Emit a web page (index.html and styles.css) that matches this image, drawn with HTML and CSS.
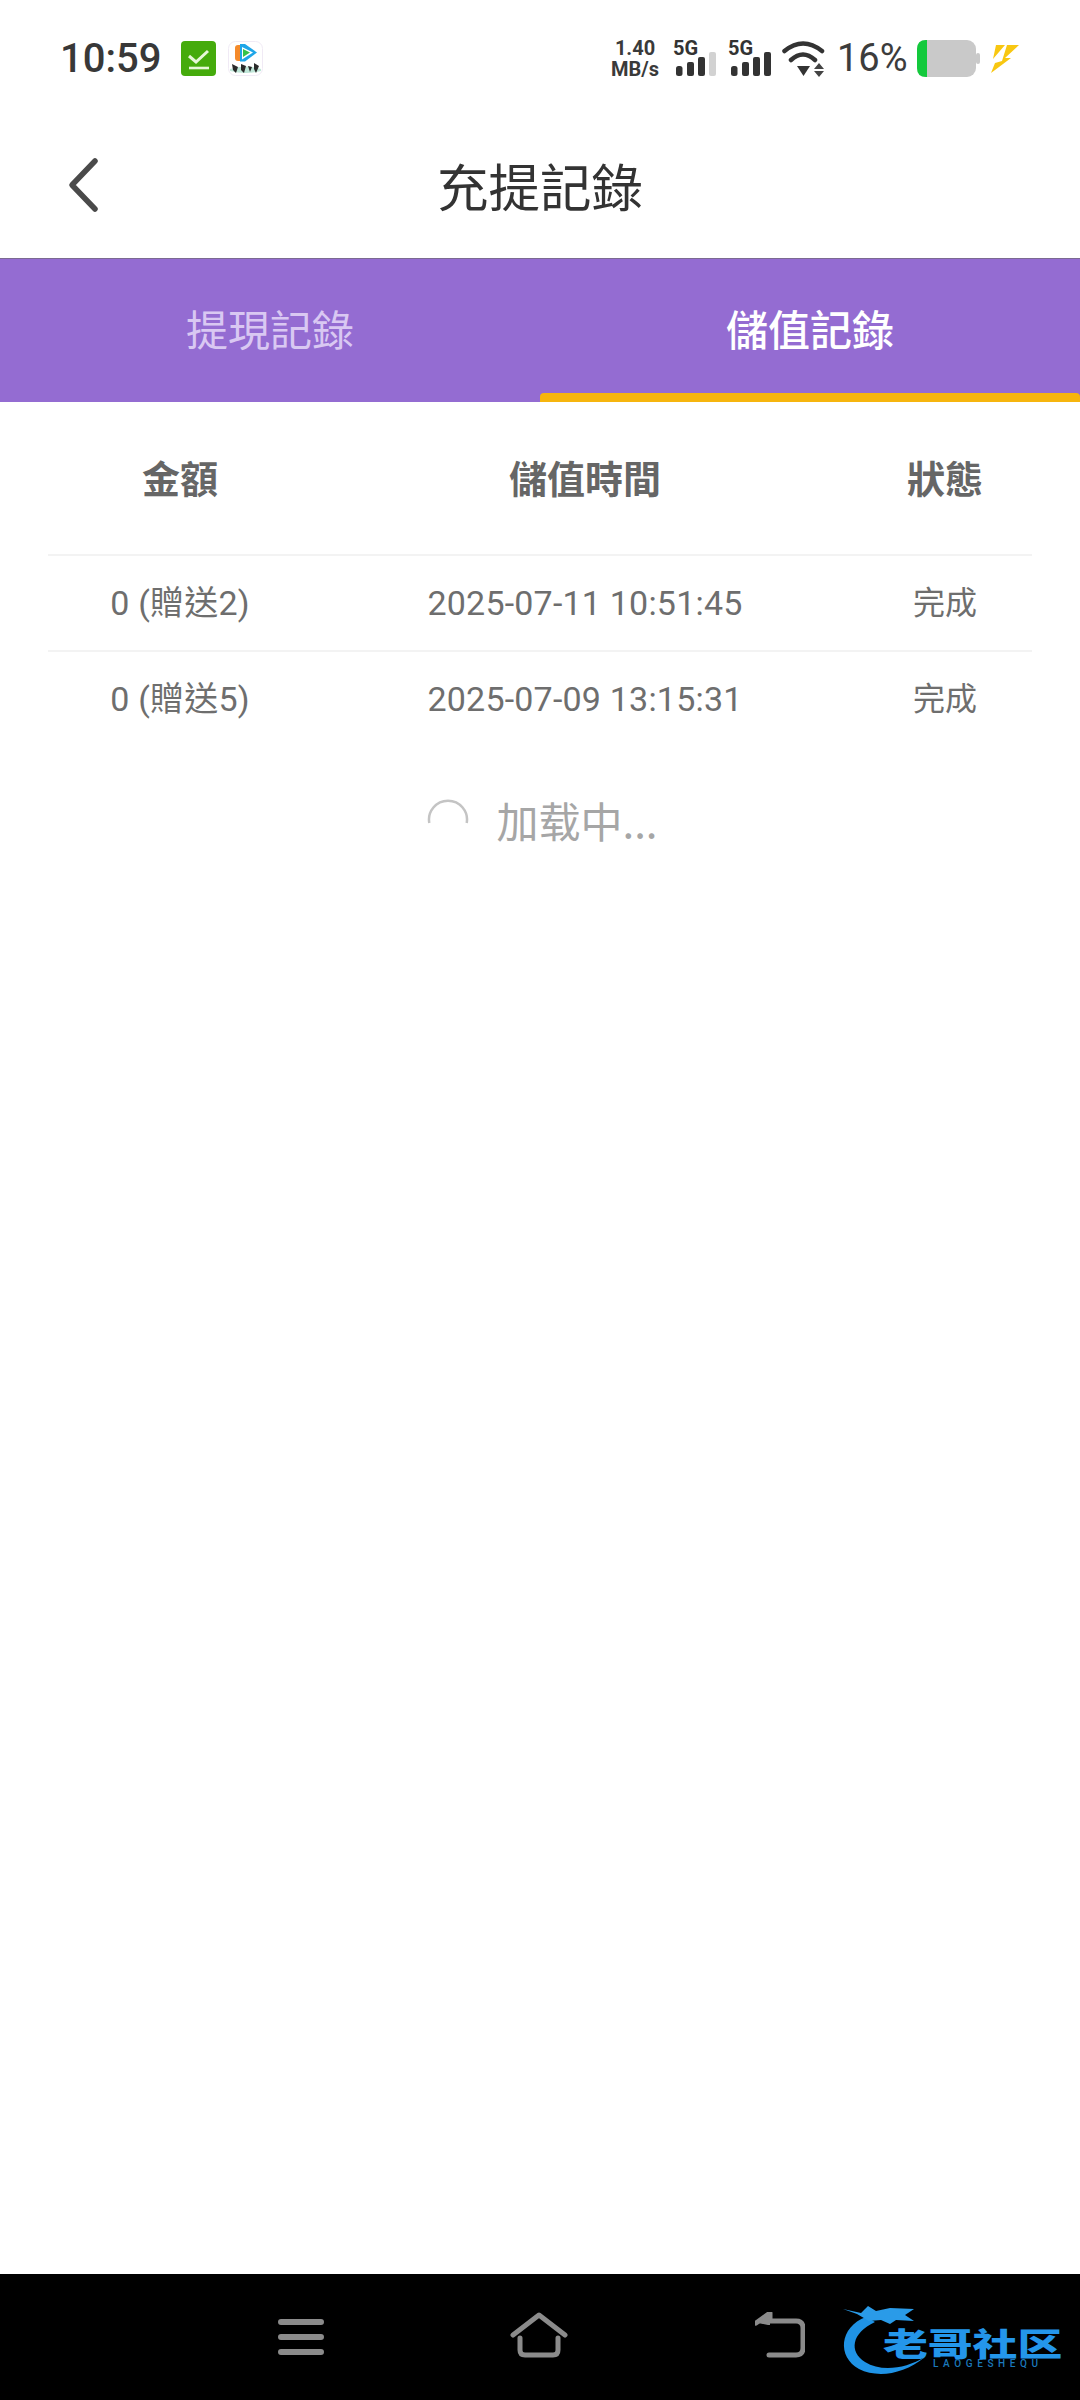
FILE: index.html
```html
<!DOCTYPE html>
<html lang="zh-Hant">
<head>
<meta charset="utf-8">
<title>充提記錄</title>
<link rel="stylesheet" href="styles.css">
</head>
<body>
<div class="screen">
  <div class="statusbar">
    <div class="status-left">
      <span class="time">10:59</span>
      <svg class="notif-green" viewBox="0 0 35 35"><rect width="35" height="35" rx="4" fill="#45ab0c"/><path d="M8 15l7 6L27 10" fill="none" stroke="#e6f7d8" stroke-width="3"/><path d="M8 27h20" stroke="#e6f7d8" stroke-width="2.6"/></svg>
      <svg class="notif-app" viewBox="0 0 35 35"><rect x=".5" y=".5" width="34" height="34" rx="7" fill="#fff" stroke="#f0eaf5"/><path d="M7 7q0-3 3-3h4v16h-4q-3 0-3-3z" fill="#f58a2a"/><path d="M12 3h5l12 8.500-12 9h-5z" fill="#1fa6e8"/><path d="M14 6l11 5.500-11 7z" fill="#fff"/><path d="M15 8l7 3.500-7 4.500z" fill="#35c24a"/><path d="M2 28q15-5 31 0v2q-15 4-31 0z" fill="#bfe6d8"/><path d="M4 23l6 3-2 6-3-3zM13 23l5 2-2 7-3-3zM20 25l4 1-2 5zM26 22l5 3-3 7-2-4z" fill="#2a2a2a"/></svg>
    </div>
    <div class="status-right">
      <div class="speed"><span>1.40</span><span>MB/s</span></div>
      <svg class="signal" viewBox="0 0 44 38"><text x="0" y="15" class="net">5G</text><rect x="3" y="26" width="6.500" height="10" rx="2.500" fill="#333"/><rect x="14" y="22" width="7" height="14" rx="2" fill="#333"/><rect x="25" y="17" width="7" height="19" rx="2" fill="#333"/><rect x="36" y="12" width="7" height="24" rx="2" fill="#d2d2d2"/></svg>
      <svg class="signal" viewBox="0 0 44 38"><text x="0" y="15" class="net">5G</text><rect x="3" y="26" width="6.500" height="10" rx="2.500" fill="#333"/><rect x="14" y="22" width="7" height="14" rx="2" fill="#333"/><rect x="25" y="17" width="7" height="19" rx="2" fill="#333"/><rect x="36" y="12" width="7" height="24" rx="2" fill="#333"/></svg>
      <svg class="wifi" viewBox="0 0 43 38"><path d="M2.500 11Q21-4 40 11M9 20Q21 9 33 20" fill="none" stroke="#333" stroke-width="4.500" stroke-linecap="round"/><path d="M15 26h13l-6.500 10z" fill="#333"/><path d="M32 29l5-6 5 6zM32 31h10l-5 6z" fill="#444"/></svg>
      <span class="percent">16%</span>
      <svg class="battery" viewBox="0 0 63 37"><rect x="0" y="0" width="59" height="37" rx="9" fill="#c9c9c9"/><rect x="59" y="13" width="4" height="11" rx="2" fill="#c9c9c9"/><path d="M9 0h1v37H9q-9 0-9-9V9q0-9 9-9z" fill="#13c93c"/></svg>
      <svg class="bolt" viewBox="0 0 28 30"><path d="M5 1h9L2 15zM16 1h12L14 14h6L0 29l4-10 7-2z" fill="#f8c711"/></svg>
    </div>
  </div>

  <header class="navbar">
    <svg class="back" viewBox="0 0 34 56"><path d="M29 4L6 28l23 24" fill="none" stroke="#4a4a4a" stroke-width="5.500" stroke-linecap="round" stroke-linejoin="round"/></svg>
    <h1 class="title">充提記錄</h1>
  </header>

  <nav class="tabs">
    <div class="tab">提現記錄</div>
    <div class="tab tab-active">儲值記錄</div>
  </nav>

  <main class="records">
    <div class="row row-head">
      <div>金額</div><div>儲值時間</div><div>狀態</div>
    </div>
    <div class="row row-data">
      <div>0 (贈送2)</div><div>2025-07-11 10:51:45</div><div class="cell-status">完成</div>
    </div>
    <div class="row row-data">
      <div>0 (贈送5)</div><div>2025-07-09 13:15:31</div><div class="cell-status">完成</div>
    </div>
    <div class="loading">
      <svg class="spinner" viewBox="0 0 42 42"><path d="M2.300 25A19 19 0 1 1 39.700 25" fill="none" stroke="#c4c4c4" stroke-width="2.500"/></svg>
      <span>加载中...</span>
    </div>
  </main>

  <footer class="navkeys">
    <svg class="key-menu" viewBox="0 0 46 38"><path d="M3 4h40M3 19h40M3 34h40" stroke="#8b8b8b" stroke-width="6" stroke-linecap="round"/></svg>
    <svg class="key-home" viewBox="0 0 58 46"><path d="M3 23L29 3l26 20" fill="none" stroke="#8b8b8b" stroke-width="5" stroke-linecap="round" stroke-linejoin="round"/><path d="M10 26v12q0 5 5 5h28q5 0 5-5V26" fill="none" stroke="#8b8b8b" stroke-width="5" stroke-linecap="round"/></svg>
    <svg class="key-back" viewBox="0 0 50 46"><path d="M1 11L15 1v8h26q7 0 7 7v20q0 7-7 7H14" fill="none" stroke="#8b8b8b" stroke-width="5" stroke-linecap="round" stroke-linejoin="round"/><path d="M3 11L15 3v10h-2z" fill="#8b8b8b"/></svg>
    <div class="watermark">
      <svg class="dragon" viewBox="0 0 76 72"><path d="M23 12C-4 22-6 52 16 64c18 9 44 6 66-12-20 12-44 15-60 5C6 47 8 28 32 17z" fill="#1f93e6"/><path d="M0 4l18 4L25 1l8 5 14-3 24 1-9 6 9 6-18-1-6 4-9-4-12 1-12-7z" fill="#2a9be8"/></svg>
      <span class="wm-cn">老哥社区</span>
      <span class="wm-en">LAOGESHEQU</span>
    </div>
  </footer>
</div>
</body>
</html>
```
FILE: styles.css
```css
* { box-sizing: border-box; }
html, body { margin: 0; padding: 0; }
body {
  width: 1080px;
  height: 2400px;
  background: #fff;
  font-family: "Noto Sans CJK TC", Roboto, sans-serif;
  color: #666;
}
.screen { width: 1080px; height: 2400px; display: flex; flex-direction: column; }

.statusbar {
  height: 118px;
  flex: none;
  display: flex;
  justify-content: space-between;
  align-items: flex-start;
  padding: 40px 61px 0 60px;
}
.status-left { display: flex; align-items: center; height: 37px; }
.time { font: 500 40px/37px Roboto, sans-serif; color: #383838; width: 121px; white-space: nowrap; }
.notif-green { width: 35px; height: 35px; }
.notif-app { width: 35px; height: 35px; margin-left: 12px; }
.status-right { display: flex; align-items: center; height: 37px; }
.speed {
  display: flex; flex-direction: column; align-items: center;
  font: 700 20px/21px Roboto, sans-serif; color: #3a3a3a;
  width: 46px; margin-right: 15px; white-space: nowrap;
}
.signal { width: 44px; height: 38px; margin-right: 11px; overflow: visible; }
.signal + .signal { margin-right: 10px; }
.net { font: 700 20px Roboto, sans-serif; fill: #333; }
.wifi { width: 43px; height: 38px; margin-right: 12px; }
.percent { font: 400 38px/37px Roboto, sans-serif; color: #3c3c3c; width: 69px; white-space: nowrap; }
.battery { width: 63px; height: 37px; margin-left: 11px; }
.bolt { width: 28px; height: 30px; margin-left: 11px; }

.navbar {
  height: 141px;
  flex: none;
  display: flex;
  align-items: center;
  justify-content: center;
  position: relative;
  padding-bottom: 6px;
  border-bottom: 1px solid #7b6a92;
}
.back { position: absolute; left: 66px; top: 39px; width: 34px; height: 56px; }
.title { margin: 0; font-size: 51.500px; font-weight: 400; color: #333; line-height: 1; }

.tabs { height: 143px; flex: none; display: flex; background: #946cd2; }
.tab {
  flex: 1;
  position: relative;
  display: flex; align-items: center; justify-content: center;
  font-size: 42px;
  color: #d9c8f2;
  padding-bottom: 6px;
}
.tab-active { color: #fff; font-weight: 500; }
.tab-active::after {
  content: "";
  position: absolute;
  left: 0; right: 0; bottom: 0;
  height: 9px;
  background: #f6b50e;
  border-radius: 4px 4px 0 0;
}

.records { flex: 1; padding: 0 48px; }
.row {
  display: grid;
  grid-template-columns: 264px 546px 174px;
  text-align: center;
  align-items: center;
}
.row-head { height: 152px; font-size: 38px; font-weight: 700; color: #666; padding-bottom: 4px; }
.row-data {
  height: 96px;
  border-top: 2px solid #f3f3f3;
  font-size: 34px;
  line-height: 40px;
  color: #6e6e6e;
  font-family: Roboto, "Noto Sans CJK TC", sans-serif;
  letter-spacing: .2px;
}
.cell-status { font-size: 32px; letter-spacing: 0; }
.loading {
  display: flex; align-items: center; justify-content: center;
  height: 146px;
  padding-left: 5px;
  font-size: 42px; color: #a6a6a6;
}
.spinner { width: 42px; height: 42px; margin-right: 27px; }

.navkeys {
  height: 126px;
  flex: none;
  background: #000;
  position: relative;
  display: flex;
  align-items: center;
  padding-left: 278px;
}
.key-menu { width: 46px; height: 38px; }
.key-home { width: 58px; height: 46px; margin: 0 0 5px 186px; }
.key-back { width: 50px; height: 46px; margin: 0 0 5px 187px; }
.watermark {
  position: absolute;
  left: 843px; top: 31px;
  width: 237px;
  height: 72px;
}
.dragon { width: 76px; height: 72px; display: block; overflow: visible; }
.wm-cn {
  position: absolute; left: 40px; top: 21px;
  font: 900 32px/32px "Noto Sans CJK SC", sans-serif;
  color: #2496ea;
  white-space: nowrap;
  transform: scaleX(1.4);
  transform-origin: 0 50%;
}
.wm-en {
  position: absolute; left: 90px; top: 54px;
  font: 500 10px/10px Roboto, sans-serif;
  color: #1b78bb;
  letter-spacing: 4.6px;
  white-space: nowrap;
}
```
